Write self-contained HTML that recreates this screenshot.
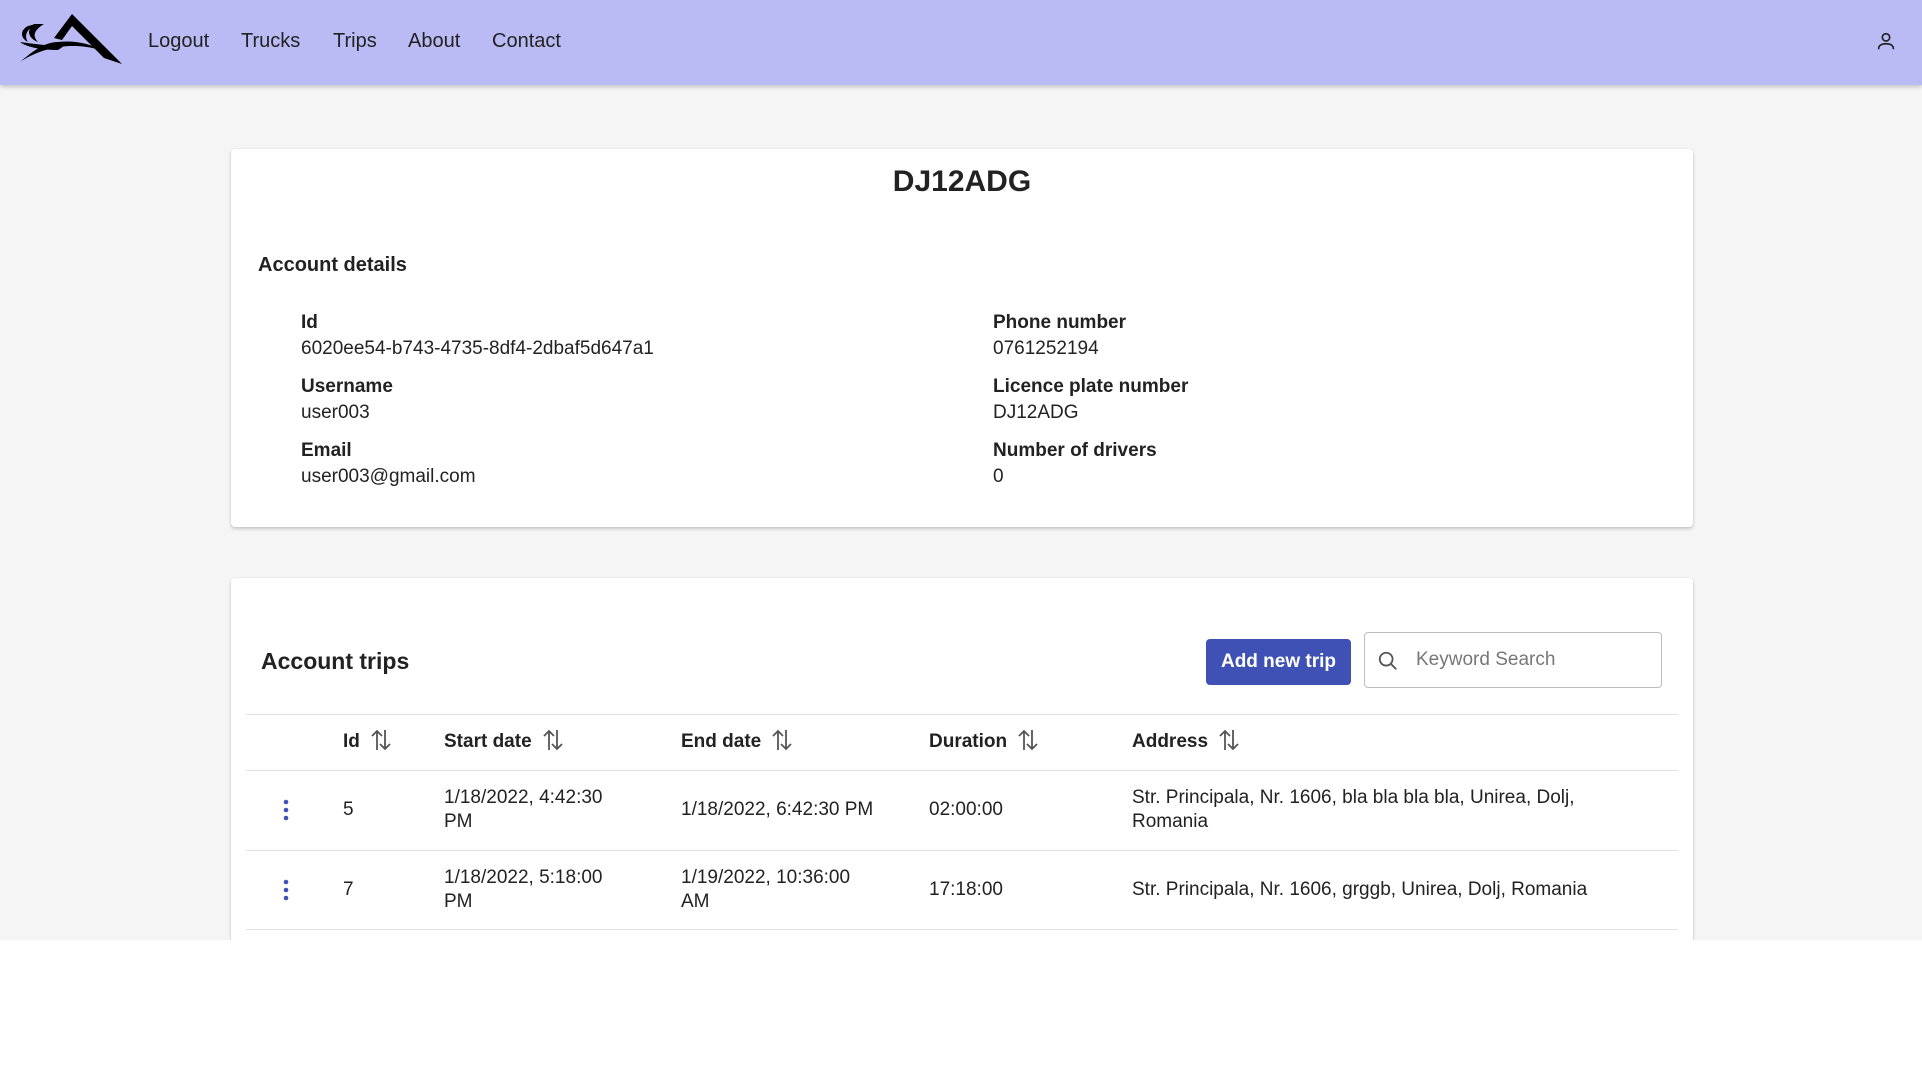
<!DOCTYPE html>
<html><head><meta charset="utf-8">
<style>
*{box-sizing:border-box;margin:0;padding:0}
body{width:1922px;height:1084px;background:#fff;font-family:"Liberation Sans",Arial,sans-serif;color:#222;position:relative;overflow:hidden}
#bg{position:absolute;left:0;top:0;width:1922px;height:940px;background:#f5f5f5;overflow:hidden}
header{position:absolute;left:0;top:0;width:1922px;height:85px;background:#babbf5;box-shadow:0 2px 4px rgba(0,0,0,.2)}
.nav{position:absolute;top:30px;font-size:20px;color:#222}
.card{position:absolute;left:231px;width:1462px;background:#fff;border-radius:4px;box-shadow:0 2px 3px rgba(0,0,0,.18),0 0 2px rgba(0,0,0,.08)}
.abs{position:absolute;white-space:nowrap}
.lbl{font-weight:bold;font-size:19px}
.val{font-size:19px}
.line{position:absolute;left:15px;width:1432px;height:1px;background:#e2e2e2}
.th{position:absolute;font-weight:bold;font-size:19px;top:729px;white-space:nowrap;line-height:26px}
.td{position:absolute;font-size:19px;line-height:24px;white-space:nowrap}
.sort{display:inline-block;vertical-align:middle;margin-left:10px;margin-top:-4px}
</style></head><body>
<div id="bg">
<header>
<svg style="position:absolute;left:14px;top:12px" width="110" height="54" viewBox="0 0 110 54">
<path d="M58 2 L108 52 L90 46 L58 14 L48 28 L40 26 Z" fill="#000"/>
<path d="M6 50 C30 34 60 30 86 38 C78 32 60 28 44 30 C30 30 18 40 6 50Z" fill="#000"/>
<path d="M6 30 C20 32 36 34 50 34 L44 38 C30 38 14 36 6 30Z" fill="#000"/>
<path d="M14 14 C6 18 6 26 14 30 C10 24 12 18 22 12Z" fill="#000"/>
<path d="M20 12 C12 18 14 26 24 30 C18 24 20 18 30 12Z" fill="#000"/>
</svg>
<span class="nav" style="left:148px">Logout</span>
<span class="nav" style="left:241px">Trucks</span>
<span class="nav" style="left:333px">Trips</span>
<span class="nav" style="left:408px">About</span>
<span class="nav" style="left:492px">Contact</span>
<svg style="position:absolute;left:1875px;top:30px" width="22" height="22" viewBox="0 0 24 24" fill="none" stroke="#222" stroke-width="1.8"><circle cx="12" cy="8" r="4"/><path d="M4 21v-1c0-3 3-5 8-5s8 2 8 5v1"/></svg>
</header>

<div class="card" style="top:149px;height:378px">
<div class="abs" style="left:0;width:1462px;text-align:center;top:16px;font-size:30px;font-weight:bold">DJ12ADG</div>
<div class="abs lbl" style="left:27px;top:105px;font-size:20px">Account details</div>
<div class="abs lbl" style="left:70px;top:163px">Id</div>
<div class="abs val" style="left:70px;top:189px">6020ee54-b743-4735-8df4-2dbaf5d647a1</div>
<div class="abs lbl" style="left:70px;top:227px">Username</div>
<div class="abs val" style="left:70px;top:253px">user003</div>
<div class="abs lbl" style="left:70px;top:291px">Email</div>
<div class="abs val" style="left:70px;top:317px">user003@gmail.com</div>
<div class="abs lbl" style="left:762px;top:163px">Phone number</div>
<div class="abs val" style="left:762px;top:189px">0761252194</div>
<div class="abs lbl" style="left:762px;top:227px">Licence plate number</div>
<div class="abs val" style="left:762px;top:253px">DJ12ADG</div>
<div class="abs lbl" style="left:762px;top:291px">Number of drivers</div>
<div class="abs val" style="left:762px;top:317px">0</div>
</div>

<div class="card" style="top:578px;height:500px">
<div class="abs" style="left:30px;top:70px;font-size:23px;font-weight:bold">Account trips</div>
<div class="abs" style="left:975px;top:61px;width:145px;height:46px;background:#3f51b5;border-radius:4px;color:#fff;font-weight:bold;font-size:19px;text-align:center;line-height:46px">Add new trip</div>
<div class="abs" style="left:1133px;top:54px;width:298px;height:56px;border:1px solid #bdbdbd;border-radius:4px;background:#fff">
<svg style="position:absolute;left:12px;top:17px" width="22" height="22" viewBox="0 0 24 24" fill="none" stroke="#555" stroke-width="2"><circle cx="10" cy="10" r="7"/><path d="M15 15l6 6"/></svg>
<span style="position:absolute;left:51px;top:16px;font-size:19px;color:#777">Keyword Search</span>
</div>
<div class="line" style="top:136px"></div>
<div class="line" style="top:192px"></div>
<div class="line" style="top:272px"></div>
<div class="line" style="top:351px"></div>
</div>

<div class="th" style="left:343px">Id<svg class="sort" width="22" height="24" viewBox="0 0 22 24" fill="none" stroke="#555" stroke-width="1.8"><path d="M7 22V3M2 8l5-5 5 5M15 2v19M10 16l5 5 5-5"/></svg></div>
<div class="th" style="left:444px">Start date<svg class="sort" width="22" height="24" viewBox="0 0 22 24" fill="none" stroke="#555" stroke-width="1.8"><path d="M7 22V3M2 8l5-5 5 5M15 2v19M10 16l5 5 5-5"/></svg></div>
<div class="th" style="left:681px">End date<svg class="sort" width="22" height="24" viewBox="0 0 22 24" fill="none" stroke="#555" stroke-width="1.8"><path d="M7 22V3M2 8l5-5 5 5M15 2v19M10 16l5 5 5-5"/></svg></div>
<div class="th" style="left:929px">Duration<svg class="sort" width="22" height="24" viewBox="0 0 22 24" fill="none" stroke="#555" stroke-width="1.8"><path d="M7 22V3M2 8l5-5 5 5M15 2v19M10 16l5 5 5-5"/></svg></div>
<div class="th" style="left:1132px">Address<svg class="sort" width="22" height="24" viewBox="0 0 22 24" fill="none" stroke="#555" stroke-width="1.8"><path d="M7 22V3M2 8l5-5 5 5M15 2v19M10 16l5 5 5-5"/></svg></div>

<svg style="position:absolute;left:282px;top:799px" width="8" height="24"><circle cx="4" cy="3" r="2.3" fill="#3f51b5"/><circle cx="4" cy="11" r="2.3" fill="#3f51b5"/><circle cx="4" cy="19" r="2.3" fill="#3f51b5"/></svg>
<div class="td" style="left:343px;top:798px">5</div>
<div class="td" style="left:444px;top:786px">1/18/2022, 4:42:30<br>PM</div>
<div class="td" style="left:681px;top:798px">1/18/2022, 6:42:30 PM</div>
<div class="td" style="left:929px;top:798px">02:00:00</div>
<div class="td" style="left:1132px;top:786px">Str. Principala, Nr. 1606, bla bla bla bla, Unirea, Dolj,<br>Romania</div>

<svg style="position:absolute;left:282px;top:879px" width="8" height="24"><circle cx="4" cy="3" r="2.3" fill="#3f51b5"/><circle cx="4" cy="11" r="2.3" fill="#3f51b5"/><circle cx="4" cy="19" r="2.3" fill="#3f51b5"/></svg>
<div class="td" style="left:343px;top:878px">7</div>
<div class="td" style="left:444px;top:866px">1/18/2022, 5:18:00<br>PM</div>
<div class="td" style="left:681px;top:866px">1/19/2022, 10:36:00<br>AM</div>
<div class="td" style="left:929px;top:878px">17:18:00</div>
<div class="td" style="left:1132px;top:878px">Str. Principala, Nr. 1606, grggb, Unirea, Dolj, Romania</div>
</div>
</body></html>
